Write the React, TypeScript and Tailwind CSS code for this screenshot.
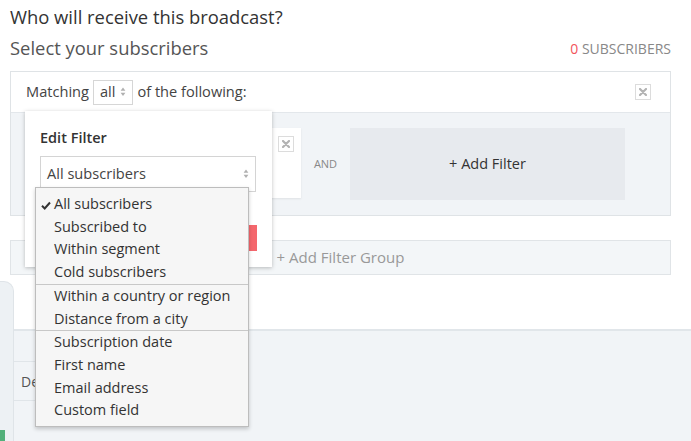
import React from 'react'

const CloseBox = () => (
  <div className="flex h-4 w-4 items-center justify-center border border-[#dcdcdc] bg-white">
    <svg width="8" height="8" viewBox="0 0 8 8">
      <path d="M1 1 L7 7 M7 1 L1 7" stroke="#b3b3b3" strokeWidth="2.2" strokeLinecap="round" />
    </svg>
  </div>
)

const UpDown = ({ size = 6 }: { size?: number }) => (
  <svg width={size} height={size * 1.6} viewBox="0 0 6 10">
    <path d="M3 0.5 L5.5 4 L0.5 4 Z" fill="#b0b0b0" />
    <path d="M3 9.5 L5.5 6 L0.5 6 Z" fill="#b0b0b0" />
  </svg>
)

const groups = [
  ['All subscribers', 'Subscribed to', 'Within segment', 'Cold subscribers'],
  ['Within a country or region', 'Distance from a city'],
  ['Subscription date', 'First name', 'Email address', 'Custom field'],
]

const App = () => {
  return (
    <div className="relative h-[441px] w-[691px] overflow-hidden bg-white font-['Open_Sans',sans-serif] text-[#333]">
      <div className="pl-[10px] pr-[20px] pt-[5px]">
        <div className="text-[18.4px] leading-[24px] text-[#333]">Who will receive this broadcast?</div>
        <div className="mt-[7px] flex items-center justify-between">
          <div className="text-[18.4px] leading-[24px] text-[#555]">Select your subscribers</div>
          <div className="text-[14px] text-[#888]">
            <span className="text-[#f2545b]">0</span> SUBSCRIBERS
          </div>
        </div>

        <div className="mt-[11px] border border-[#dfe3e6]">
          <div className="flex h-[40px] items-center justify-between pl-[15px] pr-[19px]">
            <div className="flex items-center gap-[4px] text-[14.6px] text-[#444]">
              <span>Matching</span>
              <span className="flex h-[25px] items-center gap-[5px] border border-[#d6d6d6] px-[6px]">
                all <UpDown size={6} />
              </span>
              <span>of the following:</span>
            </div>
            <CloseBox />
          </div>
          <div className="flex h-[103px] items-start border-t border-[#e3e7eb] bg-[#f1f4f7] pl-[15px] pt-[15px]">
            <div className="flex h-[70px] w-[275px] justify-end bg-white pr-[7px] pt-[8px] shadow-[0_1px_2px_rgba(0,0,0,0.08)]">
              <CloseBox />
            </div>
            <div className="flex h-[72px] w-[49px] items-center justify-center text-[11px] text-[#888]">AND</div>
            <div className="flex h-[72px] w-[275px] items-center justify-center bg-[#e7eaee] text-[14.5px] text-[#333]">
              + Add Filter
            </div>
          </div>
        </div>

        <div className="mt-[24px] flex h-[35px] items-center justify-center border border-[#e0e4e7] bg-[#f3f6f8] text-[15px] text-[#999]">
          + Add Filter Group
        </div>
      </div>

      <div className="mt-[5px] flex">
        <div className="mt-[1px] flex h-[165px] w-[14px] flex-col justify-end rounded-tr-[10px] border-r border-t border-[#dfe4e8] bg-[#edf1f4]">
          <div className="h-[16px] w-[5px] bg-[#52b07a]" />
        </div>
        <div className="mt-[49px] flex-1 border-t-2 border-[#e1e6ea] bg-[#f1f4f7]">
          <div className="mt-[30px] flex h-[40px] w-[44px] items-center whitespace-nowrap border-y border-[#e0e5e9] pl-[7px] text-[14px] text-[#555]">
            De
          </div>
          <div className="h-[50px]" />
        </div>
      </div>

      {/* Edit filter popover */}
      <div className="absolute left-[25px] top-[111px] h-[156px] w-[247px] bg-white px-[15px] pt-[16px] shadow-[0_1px_4px_rgba(0,0,0,0.25)]">
        <div className="text-[14.5px] font-semibold leading-[21px] text-[#333]">Edit Filter</div>
        <div className="mt-[8px] flex h-[36px] w-[216px] items-center justify-between border border-[#d4d4d4] pl-[6px] pr-[6px] text-[14.6px] text-[#444]">
          All subscribers
          <UpDown size={6} />
        </div>
        <div className="mt-[33px] flex justify-end">
          <div className="h-[26px] w-[90px] bg-[#f4676d]" />
        </div>
      </div>

      {/* Select dropdown */}
      <div className="absolute left-[35px] top-[187px] w-[214px] border border-[#bdbdbd] bg-[#f6f6f6] pb-[4px] pt-[5px] shadow-[0_2px_4px_rgba(0,0,0,0.2)]">
        {groups.map((g, gi) => (
          <div key={gi} className={gi > 0 ? 'border-t border-[#c8c8c8]' : ''}>
            {g.map((item) => (
              <div key={item} className="relative pl-[18px] text-[14.5px] leading-[22.7px] text-[#333]">
                {item === 'All subscribers' && (
                  <svg className="absolute left-[5px] top-[8px]" width="10" height="9" viewBox="0 0 10 9">
                    <path d="M1 4.8 L3.7 7.5 L9 1.5" stroke="#333" strokeWidth="2" fill="none" />
                  </svg>
                )}
                {item}
              </div>
            ))}
          </div>
        ))}
      </div>
    </div>
  )
}

export default App
